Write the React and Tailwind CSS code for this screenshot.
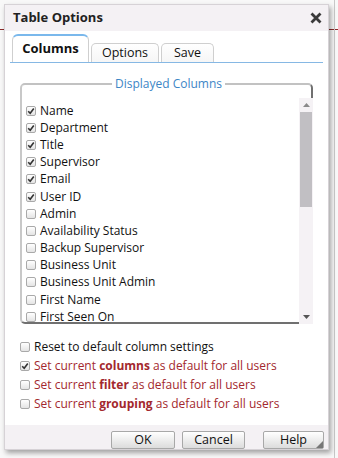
import React from 'react';

const columns = [
  { label: 'Name', checked: true },
  { label: 'Department', checked: true },
  { label: 'Title', checked: true },
  { label: 'Supervisor', checked: true },
  { label: 'Email', checked: true },
  { label: 'User ID', checked: true },
  { label: 'Admin', checked: false },
  { label: 'Availability Status', checked: false },
  { label: 'Backup Supervisor', checked: false },
  { label: 'Business Unit', checked: false },
  { label: 'Business Unit Admin', checked: false },
  { label: 'First Name', checked: false },
  { label: 'First Seen On', checked: false },
];

const Check = ({ checked }) => (
  <span className="w-[10px] h-[10px] shrink-0 rounded-[2px] border border-[#a9a9a9] bg-gradient-to-b from-white to-[#e4e4e4] flex items-center justify-center">
    {checked && (
      <svg width="8" height="8" viewBox="0 0 8 8">
        <path d="M1.2 4.2 L3.2 6.2 L6.8 1.4" fill="none" stroke="#333" strokeWidth="1.6" />
      </svg>
    )}
  </span>
);

const Button = ({ width, children }) => (
  <button
    className={`h-[18px] rounded-[2px] border border-[#a8a8a8] bg-gradient-to-b from-white to-[#dcdcdc] text-[12.5px] text-[#111] leading-none ${width}`}
  >
    {children}
  </button>
);

export default function App() {
  return (
    <div
      className="w-[338px] h-[458px] bg-[#f8f8f8] pt-[4px] pl-[4px] overflow-hidden relative"
      style={{ fontFamily: '"Open Sans", "Liberation Sans", sans-serif' }}
    >
      <div className="absolute left-0 right-0 top-[29px] h-px bg-[#8c2a2a]" />
      <div className="absolute top-0 bottom-0 left-[334px] w-px bg-[#c8c8c8]" />

      <div className="relative w-[325px] h-[446px] bg-white border border-[#d6d2d6] flex flex-col shadow-[2px_3px_5px_rgba(0,0,0,0.35)]">
        {/* Title */}
        <div className="h-[26px] bg-[#f4f1f4] flex items-center justify-between pl-[8px] pr-[6px]">
          <span className="text-[13px] font-bold text-[#222]">Table Options</span>
          <svg width="12" height="12" viewBox="0 0 12 12">
            <path d="M1.5 1.5 L10.5 10.5 M10.5 1.5 L1.5 10.5" stroke="#3a3a3a" strokeWidth="2.8" />
          </svg>
        </div>

        {/* Tabs */}
        <div className="mx-[5px] pt-[3px] flex items-end gap-[2px] border-b border-[#86b8e4]">
          <div className="w-[77px] h-[28px] ml-[2px] rounded-t-[6px] border border-[#cfcfcf] border-t-2 border-t-[#7ab8ec] border-b-0 bg-white flex items-center justify-center text-[13px] font-bold text-[#111]">
            Columns
          </div>
          <div className="w-[68px] h-[19px] rounded-t-[5px] border border-[#cfcfcf] border-b-0 bg-gradient-to-b from-white to-[#f6f6f6] flex items-center justify-center text-[12.5px] text-[#111] pt-[1px]">
            Options
          </div>
          <div className="w-[53px] h-[19px] rounded-t-[5px] border border-[#cfcfcf] border-b-0 bg-gradient-to-b from-white to-[#f6f6f6] flex items-center justify-center text-[12.5px] text-[#111] pt-[1px]">
            Save
          </div>
        </div>

        {/* Body */}
        <div className="flex-1 px-[15px] pt-[13px]">
          <fieldset className="h-[248px] border-2 border-t-[#c2c2c2] border-l-[#c8c8c8] border-r-[#707070] border-b-[#707070] rounded-[5px] pl-[4px] flex flex-col">
            <legend className="mx-auto px-[3px] text-[12px] text-[#3d86c6] leading-[16px]">Displayed Columns</legend>
            <div className="flex flex-1 mt-[6px] -mr-[2px] -mb-[2px] overflow-hidden">
              <div className="flex-1 pt-[4px] overflow-hidden">
                {columns.map((c) => (
                  <div key={c.label} className="h-[17.2px] flex items-center gap-[4px] text-[12px] text-[#111] leading-none">
                    <Check checked={c.checked} />
                    <span>{c.label}</span>
                  </div>
                ))}
              </div>
              <div className="w-[14px] bg-[#f5f2f5] flex flex-col items-center">
                <svg width="9" height="14" viewBox="0 0 9 14" className="shrink-0">
                  <path d="M1 9 L4.5 5 L8 9 Z" fill="#8a8a8a" />
                </svg>
                <div className="w-[12px] h-[95px] bg-[#c1bfc3]" />
                <div className="flex-1" />
                <svg width="9" height="14" viewBox="0 0 9 14" className="shrink-0">
                  <path d="M1 5 L4.5 9 L8 5 Z" fill="#555" />
                </svg>
              </div>
            </div>
          </fieldset>

          <div className="mt-[13px] flex flex-col text-[12px]">
            <div className="h-[19px] flex items-center gap-[4px] text-[#111]">
              <Check checked={false} />
              <span>Reset to default column settings</span>
            </div>
            <div className="h-[19px] flex items-center gap-[4px] text-[#a3282e]">
              <Check checked={true} />
              <span>Set current <b>columns</b> as default for all users</span>
            </div>
            <div className="h-[19px] flex items-center gap-[4px] text-[#a3282e]">
              <Check checked={false} />
              <span>Set current <b>filter</b> as default for all users</span>
            </div>
            <div className="h-[19px] flex items-center gap-[4px] text-[#a3282e]">
              <Check checked={false} />
              <span>Set current <b>grouping</b> as default for all users</span>
            </div>
          </div>
        </div>

        {/* Footer */}
        <div className="h-[24px] bg-[#f4f1f4] flex items-end pl-[106px] pr-[4px]">
          <div className="flex gap-[7px]">
            <Button width="w-[64px]">OK</Button>
            <Button width="w-[63px]">Cancel</Button>
          </div>
          <div className="ml-auto relative flex">
            <Button width="w-[61px]">Help</Button>
            <svg width="7" height="7" viewBox="0 0 7 7" className="absolute right-[1px] bottom-[1px]">
              <path d="M7 0 L7 7 L0 7 Z" fill="#777" />
            </svg>
          </div>
        </div>
      </div>
    </div>
  );
}
